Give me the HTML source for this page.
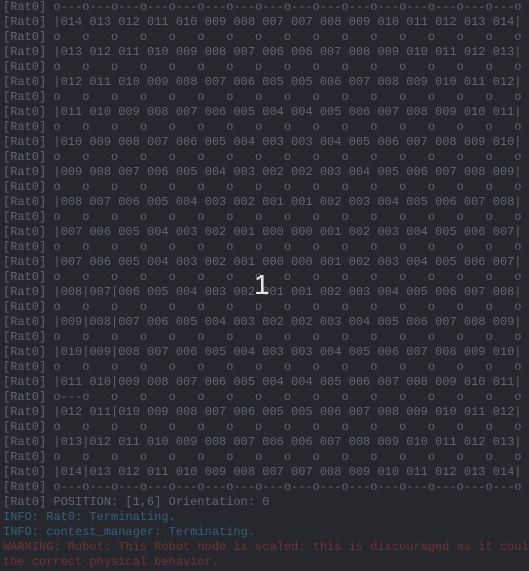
<!DOCTYPE html>
<html><head><meta charset="utf-8"><style>
html,body{margin:0;padding:0;background:#26282d;width:529px;height:571px;overflow:hidden;position:relative}
pre{margin:0;position:absolute;left:3px;top:0px;width:526px;overflow:hidden;font-family:"Liberation Mono",monospace;font-size:12px;line-height:15px;color:#62666d;white-space:pre}
.i{color:#35607e}.w{color:#6c3434}
.one{position:absolute;left:254px;top:269px;font-family:"Liberation Sans",sans-serif;font-size:28px;color:#e6e6e6}
</style></head><body><pre>[Rat0] o---o---o---o---o---o---o---o---o---o---o---o---o---o---o---o---o
[Rat0] |014 013 012 011 010 009 008 007 007 008 009 010 011 012 013 014|
[Rat0] o   o   o   o   o   o   o   o   o   o   o   o   o   o   o   o   o
[Rat0] |013 012 011 010 009 008 007 006 006 007 008 009 010 011 012 013|
[Rat0] o   o   o   o   o   o   o   o   o   o   o   o   o   o   o   o   o
[Rat0] |012 011 010 009 008 007 006 005 005 006 007 008 009 010 011 012|
[Rat0] o   o   o   o   o   o   o   o   o   o   o   o   o   o   o   o   o
[Rat0] |011 010 009 008 007 006 005 004 004 005 006 007 008 009 010 011|
[Rat0] o   o   o   o   o   o   o   o   o   o   o   o   o   o   o   o   o
[Rat0] |010 009 008 007 006 005 004 003 003 004 005 006 007 008 009 010|
[Rat0] o   o   o   o   o   o   o   o   o   o   o   o   o   o   o   o   o
[Rat0] |009 008 007 006 005 004 003 002 002 003 004 005 006 007 008 009|
[Rat0] o   o   o   o   o   o   o   o   o   o   o   o   o   o   o   o   o
[Rat0] |008 007 006 005 004 003 002 001 001 002 003 004 005 006 007 008|
[Rat0] o   o   o   o   o   o   o   o   o   o   o   o   o   o   o   o   o
[Rat0] |007 006 005 004 003 002 001 000 000 001 002 003 004 005 006 007|
[Rat0] o   o   o   o   o   o   o   o   o   o   o   o   o   o   o   o   o
[Rat0] |007 006 005 004 003 002 001 000 000 001 002 003 004 005 006 007|
[Rat0] o   o   o   o   o   o   o   o   o   o   o   o   o   o   o   o   o
[Rat0] |008|007|006 005 004 003 002 001 001 002 003 004 005 006 007 008|
[Rat0] o   o   o   o   o   o   o   o   o   o   o   o   o   o   o   o   o
[Rat0] |009|008|007 006 005 004 003 002 002 003 004 005 006 007 008 009|
[Rat0] o   o   o   o   o   o   o   o   o   o   o   o   o   o   o   o   o
[Rat0] |010|009|008 007 006 005 004 003 003 004 005 006 007 008 009 010|
[Rat0] o   o   o   o   o   o   o   o   o   o   o   o   o   o   o   o   o
[Rat0] |011 010|009 008 007 006 005 004 004 005 006 007 008 009 010 011|
[Rat0] o---o   o   o   o   o   o   o   o   o   o   o   o   o   o   o   o
[Rat0] |012 011|010 009 008 007 006 005 005 006 007 008 009 010 011 012|
[Rat0] o   o   o   o   o   o   o   o   o   o   o   o   o   o   o   o   o
[Rat0] |013|012 011 010 009 008 007 006 006 007 008 009 010 011 012 013|
[Rat0] o   o   o   o   o   o   o   o   o   o   o   o   o   o   o   o   o
[Rat0] |014|013 012 011 010 009 008 007 007 008 009 010 011 012 013 014|
[Rat0] o---o---o---o---o---o---o---o---o---o---o---o---o---o---o---o---o
[Rat0] POSITION: [1,6] Orientation: 0
<span class="i">INFO: Rat0: Terminating.</span>
<span class="i">INFO: contest_manager: Terminating.</span>
<span class="w">WARNING: Robot: This Robot node is scaled: this is discouraged as it coul</span>
<span class="w">the correct physical behavior.</span></pre>
<div class="one">1</div>
</body></html>
